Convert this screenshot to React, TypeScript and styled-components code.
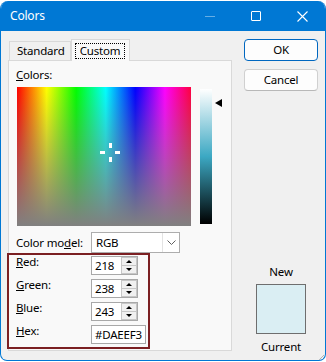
import React from "react";
import styled, { createGlobalStyle } from "styled-components";

const GlobalStyle = createGlobalStyle`
  html, body {
    margin: 0;
    padding: 0;
    background: #ffffff;
  }
  body {
    font-family: "Noto Sans", "Open Sans", sans-serif;
    font-size: 11.5px;
    letter-spacing: -0.2px;
    color: #000000;
  }
  * {
    box-sizing: border-box;
  }
`;

const HUE = 192;
const SAT = 53;
const LUM = 90;

function App() {
  return (
    <>
      <GlobalStyle />
      <Window>
        <TitleBar>
          <Title>Colors</Title>
          <Controls>
            <CaptionButton>
              <MinIcon />
            </CaptionButton>
            <CaptionButton>
              <MaxIcon />
            </CaptionButton>
            <CaptionButton>
              <svg width="11" height="11" viewBox="0 0 11 11">
                <path d="M0.5 0.5 L10.5 10.5 M10.5 0.5 L0.5 10.5" stroke="#fff" strokeWidth="1.1" />
              </svg>
            </CaptionButton>
          </Controls>
        </TitleBar>

        <Body>
          <LeftColumn>
            <TabStrip>
              <Tab>Standard</Tab>
              <Tab $active>
                <FocusRing>Custom</FocusRing>
              </Tab>
            </TabStrip>
            <Panel>
              <Label>
                <u>C</u>olors:
              </Label>
              <PickerRow>
                <Spectrum>
                  <Crosshair
                    style={{ left: `${(HUE / 360) * 174}px`, top: `${((100 - SAT) / 100) * 139}px` }}
                  >
                    <Tick $dir="top" />
                    <Tick $dir="bottom" />
                    <Tick $dir="left" />
                    <Tick $dir="right" />
                  </Crosshair>
                </Spectrum>
                <LumTrack>
                  <LumBar />
                  <LumArrow style={{ top: `${((100 - LUM) / 100) * 135 - 4}px` }} />
                </LumTrack>
              </PickerRow>

              <ModelRow>
                <FieldLabel>
                  Color mo<u>d</u>el:
                </FieldLabel>
                <Select>
                  <SelectValue>RGB</SelectValue>
                  <SelectButton>
                    <svg width="9" height="5" viewBox="0 0 9 5">
                      <path d="M0.5 0.5 L4.5 4.5 L8.5 0.5" fill="none" stroke="#5f5f5f" strokeWidth="1" />
                    </svg>
                  </SelectButton>
                </Select>
              </ModelRow>

              <Highlight>
                <FieldRow>
                  <FieldLabel $top>
                    <u>R</u>ed:
                  </FieldLabel>
                  <SpinField value="218" />
                </FieldRow>
                <FieldRow>
                  <FieldLabel $top>
                    <u>G</u>reen:
                  </FieldLabel>
                  <SpinField value="238" />
                </FieldRow>
                <FieldRow>
                  <FieldLabel $top>
                    <u>B</u>lue:
                  </FieldLabel>
                  <SpinField value="243" />
                </FieldRow>
                <FieldRow>
                  <FieldLabel $top>
                    <u>H</u>ex:
                  </FieldLabel>
                  <TextBox $width={55}>#DAEEF3</TextBox>
                </FieldRow>
              </Highlight>
            </Panel>
          </LeftColumn>

          <RightColumn>
            <Button $primary>OK</Button>
            <Button>Cancel</Button>
            <Preview>
              <PreviewLabel>New</PreviewLabel>
              <Swatch $color="#DAEEF3" />
              <PreviewLabel>Current</PreviewLabel>
            </Preview>
          </RightColumn>
        </Body>

        <Grip>
          <svg width="10" height="10" viewBox="0 0 10 10">
            <path d="M9 3 L3 9 M9 6 L6 9" stroke="#b4b4b4" strokeWidth="1" />
          </svg>
        </Grip>
      </Window>
    </>
  );
}

function SpinField({ value }: { value: string }) {
  return (
    <SpinGroup>
      <SpinText>{value}</SpinText>
      <Spinner>
        <SpinHalf>
          <ArrowUp />
        </SpinHalf>
        <SpinHalf $bottom>
          <ArrowDown />
        </SpinHalf>
      </Spinner>
    </SpinGroup>
  );
}

const Window = styled.div`
  position: relative;
  margin-top: 1px;
  width: 326px;
  height: 360px;
  border: 1px solid #0078d4;
  border-top: none;
  border-radius: 8px 8px 7px 7px;
  overflow: hidden;
  background: #f0f0f0;
  display: flex;
  flex-direction: column;
`;

const TitleBar = styled.div`
  height: 30px;
  flex: none;
  background: #0078d4;
  display: flex;
  align-items: center;
  padding-left: 9px;
`;

const Title = styled.div`
  flex: 1;
  color: #ffffff;
  font-size: 12px;
  line-height: 16px;
`;

const Controls = styled.div`
  display: flex;
  height: 100%;
`;

const CaptionButton = styled.div`
  width: 46px;
  height: 100%;
  display: flex;
  align-items: center;
  justify-content: center;
`;

const MinIcon = styled.div`
  width: 10px;
  height: 1px;
  background: rgba(255, 255, 255, 0.4);
`;

const MaxIcon = styled.div`
  width: 10px;
  height: 10px;
  border: 1px solid #ffffff;
  border-radius: 1px;
`;

const Body = styled.div`
  display: flex;
  padding: 8px 7px 0 7px;
  gap: 12px;
`;

const LeftColumn = styled.div`
  width: 224px;
  display: flex;
  flex-direction: column;
`;

const TabStrip = styled.div`
  height: 21px;
  display: flex;
  align-items: flex-end;
  padding-left: 1px;
  position: relative;
  z-index: 1;
`;

const Tab = styled.div<{ $active?: boolean }>`
  height: ${(p) => (p.$active ? 22 : 19)}px;
  width: ${(p) => (p.$active ? 59 : 62)}px;
  margin-bottom: ${(p) => (p.$active ? -1 : 0)}px;
  padding-top: ${(p) => (p.$active ? 3 : 1)}px;
  padding-left: ${(p) => (p.$active ? 3 : 7)}px;
  background: ${(p) => (p.$active ? "#f9f9f9" : "#f0f0f0")};
  border: 1px solid #d9d9d9;
  border-bottom: none;
  line-height: 16px;
  white-space: nowrap;
`;

const FocusRing = styled.span`
  display: inline-block;
  height: 16px;
  width: 50px;
  text-align: center;
  line-height: 14px;
  border: 1px dotted #000000;
`;

const Panel = styled.div`
  height: 291px;
  background: #f9f9f9;
  border: 1px solid #d9d9d9;
  padding: 6px 0 0 7px;
`;

const Label = styled.div`
  line-height: 16px;
`;

const PickerRow = styled.div`
  display: flex;
  align-items: flex-start;
  margin-top: 4px;
  margin-left: 1px;
`;

const Spectrum = styled.div`
  position: relative;
  width: 174px;
  height: 139px;
  background: linear-gradient(to bottom, rgba(128, 128, 128, 0), rgb(128, 128, 128)),
    linear-gradient(
      to right,
      #ff0000 0%,
      #ffff00 17%,
      #00ff00 34%,
      #00ffff 51%,
      #0000ff 68%,
      #ff00ff 85%,
      #ff0040 100%
    );
`;

const Crosshair = styled.div`
  position: absolute;
  width: 0;
  height: 0;
`;

const Tick = styled.div<{ $dir: "top" | "bottom" | "left" | "right" }>`
  position: absolute;
  background: #ffffff;
  width: ${(p) => (p.$dir === "top" || p.$dir === "bottom" ? 3 : 5)}px;
  height: ${(p) => (p.$dir === "top" || p.$dir === "bottom" ? 5 : 3)}px;
  left: ${(p) => (p.$dir === "left" ? -10 : p.$dir === "right" ? 5 : -1)}px;
  top: ${(p) => (p.$dir === "top" ? -9 : p.$dir === "bottom" ? 5 : -1)}px;
`;

const LumTrack = styled.div`
  position: relative;
  margin-left: 9px;
  margin-top: 2px;
  width: 24px;
  height: 135px;
`;

const LumBar = styled.div`
  width: 12px;
  height: 135px;
  background: linear-gradient(
    to bottom,
    #ffffff 0%,
    hsl(${HUE}, ${SAT}%, 50%) 50%,
    #000000 100%
  );
`;

const LumArrow = styled.div`
  position: absolute;
  left: 15px;
  width: 0;
  height: 0;
  border-top: 4.5px solid transparent;
  border-bottom: 4.5px solid transparent;
  border-right: 7px solid #000000;
`;

const ModelRow = styled.div`
  display: flex;
  align-items: center;
  margin-top: 6px;
`;

const FieldLabel = styled.div<{ $top?: boolean }>`
  width: 75px;
  flex: none;
  line-height: 16px;
  margin-top: ${(p) => (p.$top ? -2 : 0)}px;
  white-space: nowrap;
`;

const Select = styled.div`
  width: 89px;
  height: 21px;
  border: 1px solid #adadad;
  background: #ffffff;
  display: flex;
`;

const SelectValue = styled.div`
  flex: 1;
  padding-left: 4px;
  line-height: 19px;
`;

const SelectButton = styled.div`
  width: 17px;
  border-left: 1px solid #e3e3e3;
  display: flex;
  align-items: center;
  justify-content: center;
`;

const Highlight = styled.div`
  width: 143px;
  margin-left: -9px;
  border: 2px solid #7b1f22;
  padding: 1px 0 3px 7px;
  display: flex;
  flex-direction: column;
  gap: 4px;
`;

const FieldRow = styled.div`
  display: flex;
  align-items: flex-start;
  height: 19px;
`;

const SpinGroup = styled.div`
  width: 47px;
  height: 19px;
  border: 1px solid #a8a8a8;
  background: #ffffff;
  display: flex;
`;

const SpinText = styled.div`
  flex: 1;
  padding-left: 3px;
  line-height: 17px;
`;

const Spinner = styled.div`
  width: 16px;
  height: 17px;
  border: 1px solid #c6c6c6;
  background: #f0f0f0;
  display: flex;
  flex-direction: column;
`;

const SpinHalf = styled.div<{ $bottom?: boolean }>`
  flex: 1;
  display: flex;
  align-items: center;
  justify-content: center;
  border-top: ${(p) => (p.$bottom ? "1px solid #c6c6c6" : "none")};
`;

const ArrowUp = styled.div`
  width: 0;
  height: 0;
  border-left: 3px solid transparent;
  border-right: 3px solid transparent;
  border-bottom: 3px solid #000000;
`;

const ArrowDown = styled.div`
  width: 0;
  height: 0;
  border-left: 3px solid transparent;
  border-right: 3px solid transparent;
  border-top: 3px solid #000000;
`;

const TextBox = styled.div<{ $width: number }>`
  width: ${(p) => p.$width}px;
  height: 19px;
  border: 1px solid #a8a8a8;
  background: #ffffff;
  padding-left: 3px;
  line-height: 17px;
  white-space: nowrap;
  overflow: hidden;
`;

const RightColumn = styled.div`
  width: 74px;
  display: flex;
  flex-direction: column;
  gap: 8px;
`;

const Button = styled.div<{ $primary?: boolean }>`
  height: 22px;
  border: 1px solid ${(p) => (p.$primary ? "#0067c0" : "#d0d0d0")};
  border-bottom-color: ${(p) => (p.$primary ? "#0067c0" : "#b8b8b8")};
  border-radius: 4px;
  background: #fdfdfd;
  text-align: center;
  line-height: 20px;
`;

const Preview = styled.div`
  margin-top: 165px;
  display: flex;
  flex-direction: column;
  align-items: center;
`;

const PreviewLabel = styled.div`
  line-height: 16px;
`;

const Swatch = styled.div<{ $color: string }>`
  width: 50px;
  height: 50px;
  margin: 4px 0 5px;
  border: 1px solid #6e6e6e;
  background: ${(p) => p.$color};
`;

const Grip = styled.div`
  position: absolute;
  right: 0;
  bottom: 0;
  width: 10px;
  height: 10px;
`;

export default App;
